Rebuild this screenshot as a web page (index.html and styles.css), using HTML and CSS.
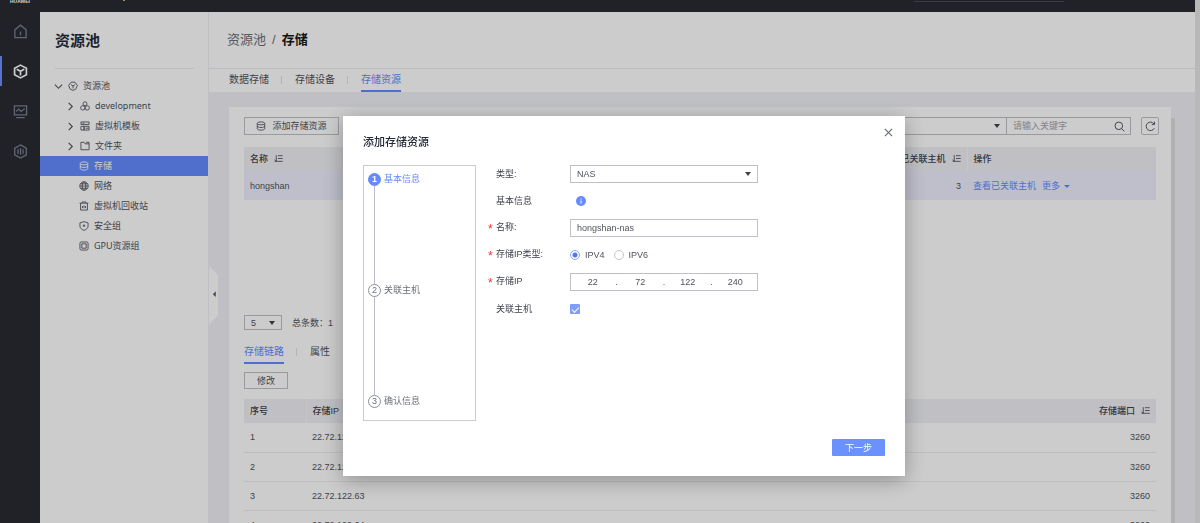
FILE: index.html
```html
<!DOCTYPE html>
<html lang="zh-CN">
<head>
<meta charset="utf-8">
<title>资源池 - 存储</title>
<link rel="stylesheet" href="styles.css">
</head>
<body>
<svg class="defs" width="0" height="0" aria-hidden="true">
  <symbol id="i-cube" viewBox="0 0 16 16"><path d="M5 1.800h6l4 5.200-2.500 6L8 15l-4.500-2L1 7zM4.500 5.500 8 8l3.500-2.500M8 8v4"/></symbol>
  <symbol id="i-db" viewBox="0 0 16 16"><ellipse cx="8" cy="3.800" rx="6" ry="2.400"/><path d="M2 3.800v8.400c0 1.300 2.700 2.400 6 2.400s6-1.100 6-2.400V3.800M2 8c0 1.300 2.700 2.400 6 2.400S14 9.300 14 8"/></symbol>
  <symbol id="i-sort" viewBox="0 0 16 16"><path d="M7 3h8.500M7 8h8.500M1 13h14.500M4 2v11L1 10.300"/></symbol>
  <symbol id="i-right" viewBox="0 0 10 10"><path d="m3 1 4 4-4 4"/></symbol>
</svg>

<div class="app">
  <header class="topbar">
    <span class="brand">HUAWEI</span>
    <span class="product">FusionCompute</span>
    <span class="top-search"></span>
  </header>

  <nav class="rail" aria-label="主导航">
    <a class="rail-item" href="#" aria-label="首页"><svg viewBox="0 0 16 16"><path d="M2 6.200 8 1.200l6 5v8.300H2zM8 8v4"/></svg></a>
    <a class="rail-item active" href="#" aria-label="资源池"><svg viewBox="0 0 16 16"><path d="M8 1.200 14.300 4.500v7L8 14.800 1.700 11.500v-7zM4 5.500 8 7.800l4-2.300M8 7.800v4.400"/></svg></a>
    <a class="rail-item" href="#" aria-label="监控"><svg viewBox="0 0 16 16"><path d="M1.500 2h13v9.500h-13zM3.500 14.500h9M3.500 8l2.500-2.500 2.500 2.500 4-3"/></svg></a>
    <a class="rail-item" href="#" aria-label="系统管理"><svg viewBox="0 0 16 16"><path d="M8 1 14.200 4.500v7L8 15 1.800 11.500v-7zM5.300 5.500v5M8 4.500v7M10.700 5.500v5"/></svg></a>
  </nav>

  <aside class="side">
    <h2 class="side-title">资源池</h2>
    <ul class="tree">
      <li class="node root"><svg class="caret" viewBox="0 0 10 10"><path d="m1 3 4 4 4-4"/></svg><svg class="icon"><use href="#i-cube"/></svg><span>资源池</span></li>
      <li class="node"><svg class="caret"><use href="#i-right"/></svg><svg class="icon" viewBox="0 0 16 16"><circle cx="8" cy="4.500" r="3.200"/><circle cx="4.500" cy="11" r="3.500"/><circle cx="11.500" cy="11" r="3.500"/></svg><span>development</span></li>
      <li class="node"><svg class="caret"><use href="#i-right"/></svg><svg class="icon" viewBox="0 0 16 16"><path d="M1.500 1.500h13v4h-13zM1.500 8.500h5v6h-5zM6.500 8.500h8v6h-8zM4 3.500h3M9 11.500h5"/></svg><span>虚拟机模板</span></li>
      <li class="node"><svg class="caret"><use href="#i-right"/></svg><svg class="icon" viewBox="0 0 16 16"><path d="M1.500 2h5l1.500 2.500h6.500v9.500h-13zM9.500 2h5v2.500"/></svg><span>文件夹</span></li>
      <li class="node leaf selected"><svg class="icon"><use href="#i-db"/></svg><span>存储</span></li>
      <li class="node leaf"><svg class="icon" viewBox="0 0 16 16"><circle cx="8" cy="8" r="6.700"/><ellipse cx="8" cy="8" rx="3" ry="6.700"/><path d="M1.300 8h13.400M2.500 4.500h11M2.500 11.500h11"/></svg><span>网络</span></li>
      <li class="node leaf"><svg class="icon" viewBox="0 0 16 16"><path d="M1 3.500h14M5 3.500v-2h6v2M2.500 3.500v11h11v-11M5.500 11.500V8M8 11.500V7M10.500 11.500V8"/></svg><span>虚拟机回收站</span></li>
      <li class="node leaf"><svg class="icon" viewBox="0 0 16 16"><path d="M8 1 14.500 3v5c0 3.500-3 5.500-6.500 7-3.500-1.500-6.500-3.500-6.500-7V3zM8 5.500v4M6 7.500h4"/></svg><span>安全组</span></li>
      <li class="node leaf"><svg class="icon" viewBox="0 0 16 16"><rect x="1.500" y="1.500" width="13" height="13" rx="2"/><path d="M4.500 4.500h7v7h-7z"/></svg><span>GPU资源组</span></li>
    </ul>
  </aside>

  <main class="main">
    <button class="collapse" type="button" aria-label="收起"><svg viewBox="0 0 8 52"><path d="M0 0 8 8v36l-8 8z" class="tab-shape"/><path d="M6 22.500v5L3.500 25z" class="tab-arrow"/></svg></button>
    <div class="crumbs"><a href="#">资源池</a><span>/</span><strong>存储</strong></div>
    <nav class="tabs page-tabs"><a href="#">数据存储</a><a href="#">存储设备</a><a href="#" class="current">存储资源</a></nav>

    <div class="content">
      <section class="card">
        <div class="toolbar">
          <button class="btn add" type="button"><svg class="icon"><use href="#i-db"/></svg>添加存储资源</button>
          <div class="filter">
            <span class="select-wrap filter-field"><select aria-label="筛选条件"><option></option></select></span>
            <span class="search"><input type="text" aria-label="关键字" placeholder="请输入关键字"><svg viewBox="0 0 16 16"><circle cx="7" cy="7" r="5.500"/><path d="m11 11 4 4"/></svg></span>
          </div>
          <button class="refresh" type="button" aria-label="刷新"><svg viewBox="0 0 16 16"><path d="M13.500 10.500A6.200 6.200 0 1 1 13 4.200M13.800 1v4h-4"/></svg></button>
        </div>

        <table class="grid resources">
          <thead><tr><th>名称<svg class="sort"><use href="#i-sort"/></svg></th><th class="num">已关联主机<svg class="sort"><use href="#i-sort"/></svg></th><th class="ops">操作</th></tr></thead>
          <tbody><tr><td>hongshan</td><td class="num">3</td><td class="ops"><a href="#">查看已关联主机</a><a href="#" class="more">更多</a></td></tr></tbody>
        </table>

        <div class="pager">
          <span class="select-wrap page-size"><select aria-label="每页条数"><option>5</option></select></span>
          <span>总条数：1</span>
        </div>

        <nav class="tabs detail-tabs"><a href="#" class="current">存储链路</a><a href="#">属性</a></nav>
        <button class="btn edit" type="button">修改</button>

        <table class="grid links">
          <thead><tr><th class="seq">序号</th><th>存储IP</th><th class="num">存储端口<svg class="sort"><use href="#i-sort"/></svg></th></tr></thead>
          <tbody>
            <tr><td>1</td><td>22.72.122.61</td><td class="num">3260</td></tr>
            <tr><td>2</td><td>22.72.122.62</td><td class="num">3260</td></tr>
            <tr><td>3</td><td>22.72.122.63</td><td class="num">3260</td></tr>
            <tr><td>4</td><td>22.72.122.64</td><td class="num">3260</td></tr>
          </tbody>
        </table>
      </section>
      <div class="card-scroll"></div>
    </div>
  </main>
  <div class="page-scroll"></div>
</div>

<div class="mask">
  <form class="dialog" role="dialog" aria-labelledby="dialog-title">
    <h3 id="dialog-title">添加存储资源</h3>
    <button class="close" type="button" aria-label="关闭"><svg viewBox="0 0 10 10"><path d="m1 1 8 8M9 1 1 9"/></svg></button>
    <div class="dialog-body">
      <ol class="steps">
        <li class="active"><b>1</b><span>基本信息</span></li>
        <li><b>2</b><span>关联主机</span></li>
        <li><b>3</b><span>确认信息</span></li>
      </ol>
      <div class="fields">
        <label for="type">类型:</label>
        <span class="select-wrap"><select id="type"><option>NAS</option></select></span>

        <span class="label">基本信息</span>
        <span class="hint"><svg viewBox="0 0 10 10"><circle cx="5" cy="5" r="5"/><path d="M5 4.500v3M5 2.500v1"/></svg></span>

        <label for="name" class="required">名称:</label>
        <input id="name" class="text" type="text" value="hongshan-nas">

        <span class="label required" id="ip-type">存储IP类型:</span>
        <span class="radios" role="radiogroup" aria-labelledby="ip-type">
          <label><input type="radio" name="ipv" checked>IPV4</label>
          <label><input type="radio" name="ipv">IPV6</label>
        </span>

        <label for="ip1" class="required">存储IP</label>
        <span class="ip"><input id="ip1" value="22"><i>.</i><input aria-label="第二段" value="72"><i>.</i><input aria-label="第三段" value="122"><i>.</i><input aria-label="第四段" value="240"></span>

        <label for="assoc">关联主机</label>
        <span class="check"><input id="assoc" type="checkbox" checked></span>
      </div>
    </div>
    <footer class="dialog-foot"><button class="primary" type="button">下一步</button></footer>
  </form>
</div>
</body>
</html>
```

FILE: styles.css
```css
* { box-sizing: border-box; }

body {
  margin: 0;
  font: 9px/12px "Liberation Sans", "Noto Sans CJK SC", sans-serif;
  color: #50535e;
}

h2, h3, ul, ol { margin: 0; padding: 0; list-style: none; }
a { color: inherit; text-decoration: none; }
input, select, button { font: inherit; color: inherit; margin: 0; }
svg { display: block; fill: none; stroke: currentColor; stroke-width: 1.4; }
.defs { position: absolute; }
.icon { width: 10px; height: 10px; flex: none; }

/* Shell */
.app {
  display: grid;
  grid-template: 12px 1fr / 40px 169px 1fr 5px;
  height: 100vh;
  overflow: hidden;
  background: #fff;
}

.topbar {
  grid-column: 1 / 4;
  display: flex;
  align-items: flex-start;
  background: #292b33;
  color: #fff;
  overflow: hidden;
}
.brand { width: 40px; margin-top: -5px; font-size: 5px; font-weight: 700; text-align: center; }
.product { margin: -12px 0 0 16px; font-size: 13px; }
.top-search { width: 150px; height: 2px; margin: 0 131px 0 auto; border-bottom: 1px solid #484b55; }

.rail { grid-row: 2; grid-column: 1; background: #292b33; color: #7b8090; }
.rail-item { display: flex; align-items: center; justify-content: center; height: 40px; }
.rail-item:first-child { height: 39px; }
.rail-item svg { width: 15px; height: 15px; }
.rail-item.active { color: #fff; background: linear-gradient(#6b8fff, #6b8fff) 0 50% / 2px 30px no-repeat; }
.rail-item.active svg { stroke-width: 1.8; }

.page-scroll { grid-column: 4; grid-row: 1 / 3; background: #e6e7e8; }

/* Resource tree */
.side { grid-row: 2; border-right: 1px solid #f0f1f5; }
.side-title {
  margin: 0 14px 7px 15px;
  padding: 16px 0;
  border-bottom: 1px solid #eceef2;
  color: #252b3a;
  font: 700 15px/24px "Noto Sans CJK SC", sans-serif;
}
.node {
  display: flex;
  align-items: center;
  gap: 5px;
  height: 20px;
  padding-left: 26px;
  font-family: "Noto Sans", "Noto Sans CJK SC", sans-serif;
}
.root { padding-left: 14px; }
.leaf { padding-left: 39px; }
.caret { width: 9px; height: 9px; flex: none; stroke-width: 1.2; }
.selected { background: #648bff; color: #fff; }

/* Main column */
.main { position: relative; grid-row: 2; display: flex; flex-direction: column; min-width: 0; min-height: 0; }
.collapse { position: absolute; left: 0; top: 254px; width: 9px; height: 52px; padding: 0; border: 0; background: none; }
.tab-shape { fill: #fff; stroke: none; }
.tab-arrow { fill: #50535e; stroke: none; }

.crumbs {
  display: flex;
  align-items: center;
  gap: 6px;
  height: 57px;
  padding-left: 18px;
  border-bottom: 1px solid #eceef2;
  font-size: 13px;
  color: #6c707c;
}
.crumbs strong { color: #191919; }

.tabs { display: flex; font-size: 10px; line-height: 14px; }
.tabs a { padding-bottom: 3px; border-bottom: 2px solid transparent; }
.tabs a + a { margin-left: 26px; }
.tabs a:not(:first-child)::before {
  content: "";
  float: left;
  width: 1px;
  height: 8px;
  margin: 3px 0 0 -14px;
  background: #dfe1e6;
}
.tabs .current { color: #648bff; border-color: #648bff; }
.page-tabs { height: 23px; padding: 4px 20px 0; flex: none; }

.content {
  flex: 1;
  min-height: 0;
  display: flex;
  padding: 15px 20px 0;
  overflow: hidden;
  background: #f0f1f6;
}
.card { flex: 1; padding: 10px 15px 0; background: #fff; }
.card-scroll { width: 4px; margin-top: 11px; background: #dcdde0; }

.btn { display: flex; align-items: center; justify-content: center; padding: 0; border: 1px solid #bfc1c8; background: #fff; }
.add { gap: 6px; width: 95px; height: 18px; }
.edit { width: 44px; height: 17px; margin: 8px 0 10px; }

.toolbar { display: flex; margin-bottom: 12px; }
.filter { display: flex; width: 380px; height: 18px; margin-left: auto; border: 1px solid #bfc1c8; }
.filter-field { flex: 1; border-right: 1px solid #bfc1c8; }
.search { display: flex; align-items: center; width: 123px; padding-right: 5px; }
.search input { flex: 1; min-width: 0; padding: 0 6px; border: 0; background: none; outline: 0; }
.search input::placeholder { color: #a2a5ae; }
.search svg { width: 11px; height: 11px; }
.refresh { display: grid; place-items: center; width: 18px; height: 18px; margin: 0 -3px 0 10px; padding: 0; border: 1px solid #bfc1c8; border-radius: 2px; background: #fff; }
.refresh svg { width: 11px; height: 11px; }

.select-wrap { position: relative; display: block; }
.select-wrap select { display: block; width: 100%; height: 100%; padding: 0 6px; border: 0; background: none; appearance: none; outline: 0; }
.select-wrap::after {
  content: "";
  position: absolute;
  right: 6px;
  top: calc(50% - 2px);
  border: 3px solid transparent;
  border-top: 4px solid #40434e;
  border-bottom: 0;
  pointer-events: none;
}

/* Tables */
.grid { width: 100%; border-collapse: collapse; }
.grid th { height: 24px; padding: 0 6px; background: #f0f1f6; color: #40434e; font-weight: 500; text-align: left; }
.grid th + th { border-left: 1px solid #f8f8fb; }
.grid td { height: 29px; padding: 0 6px; }
.grid .num { text-align: right; }
.sort { display: inline-block; width: 9px; height: 9px; margin-left: 6px; vertical-align: -1px; }
.grid .ops { width: 189px; }
.resources tbody { background: #eeeffe; }
.resources .ops a { color: #648bff; }
.resources .ops .more { margin-left: 6px; }
.more::after { content: ""; display: inline-block; margin-left: 4px; vertical-align: 1px; border: 3px solid transparent; border-top-color: currentColor; border-bottom: 0; }
.links td { border-bottom: 1px solid #eceef2; }
.links .seq { width: 62px; }

.pager { display: flex; align-items: center; gap: 10px; margin: 115px 0 15px; }
.page-size { width: 38px; height: 15px; border: 1px solid #bfc1c8; }

/* Dialog */
.mask {
  position: fixed;
  inset: 0;
  display: flex;
  align-items: center;
  justify-content: center;
  padding: 69px 0 0 48px;
  background: rgba(0, 0, 0, .2);
}
.dialog { position: relative; width: 562px; padding: 20px; background: #fff; box-shadow: 0 4px 20px rgba(0, 0, 0, .3); }
.dialog h3 { margin-bottom: 17px; color: #252b3a; font-size: 11px; line-height: 12px; font-weight: 500; }
.close { position: absolute; top: 12px; right: 12px; width: 9px; height: 9px; padding: 0; border: 0; background: none; color: #6c707c; }
.dialog-body { display: flex; }

.steps { display: flex; flex-direction: column; width: 113px; height: 256px; padding: 7px 4px 12px; border: 1px solid #c9cbd1; color: #6c707c; }
.steps li { position: relative; display: flex; gap: 3px; flex: 1; line-height: 13px; }
.steps li:last-child { flex: none; }
.steps li:not(:last-child)::before { content: ""; position: absolute; left: 6px; top: 13px; bottom: 0; width: 1px; background: #b9bbc3; }
.steps b { width: 13px; height: 13px; border: 1px solid #8a8e99; border-radius: 50%; font-weight: 400; line-height: 11px; text-align: center; }
.steps .active { color: #648bff; }
.steps .active b { border-color: #648bff; background: #648bff; color: #fff; font-weight: 700; }

.fields { display: grid; grid-template-columns: 74px 188px; grid-auto-rows: 17px; row-gap: 10px; align-items: center; margin-left: 20px; }
.fields > label, .label { color: #40434e; }
.required::before { content: "*"; float: left; width: 8px; margin-left: -8px; padding-top: 2px; color: #f23030; font-size: 12px; }
.fields .select-wrap, .text, .ip { height: 18px; border: 1px solid #bfc1c8; }
.text { width: 100%; padding: 0 6px; outline: 0; }
.hint svg { width: 10px; height: 10px; margin-left: 6px; }
.hint circle { fill: #648bff; stroke: none; }
.hint path { stroke: #fff; stroke-width: 1; }
.radios { display: flex; gap: 9px; }
.radios label { display: flex; align-items: center; gap: 5px; }
.radios input { appearance: none; width: 10px; height: 10px; border: 1px solid #c3c5cc; border-radius: 50%; }
.radios input:checked { border-color: #8ba7ff; background: radial-gradient(#4f78f5 2px, #fff 3px); }
.ip { display: flex; align-items: center; }
.ip input { flex: 1; min-width: 0; padding: 0; border: 0; background: none; text-align: center; outline: 0; }
.ip i { width: 4px; font-style: normal; text-align: center; }
.check input { display: block; appearance: none; width: 10px; height: 10px; border-radius: 1px; background: #7f9dfb; }
.check input::before { content: ""; display: block; width: 6px; height: 3px; margin: 3px 2px; border: solid #fff; border-width: 0 0 1px 1px; rotate: -45deg; }

.dialog-foot { display: flex; justify-content: flex-end; margin-top: 18px; }
.primary { width: 53px; height: 17px; padding: 0; border: 0; border-radius: 1px; background: #6b91ff; color: #fff; }
```
